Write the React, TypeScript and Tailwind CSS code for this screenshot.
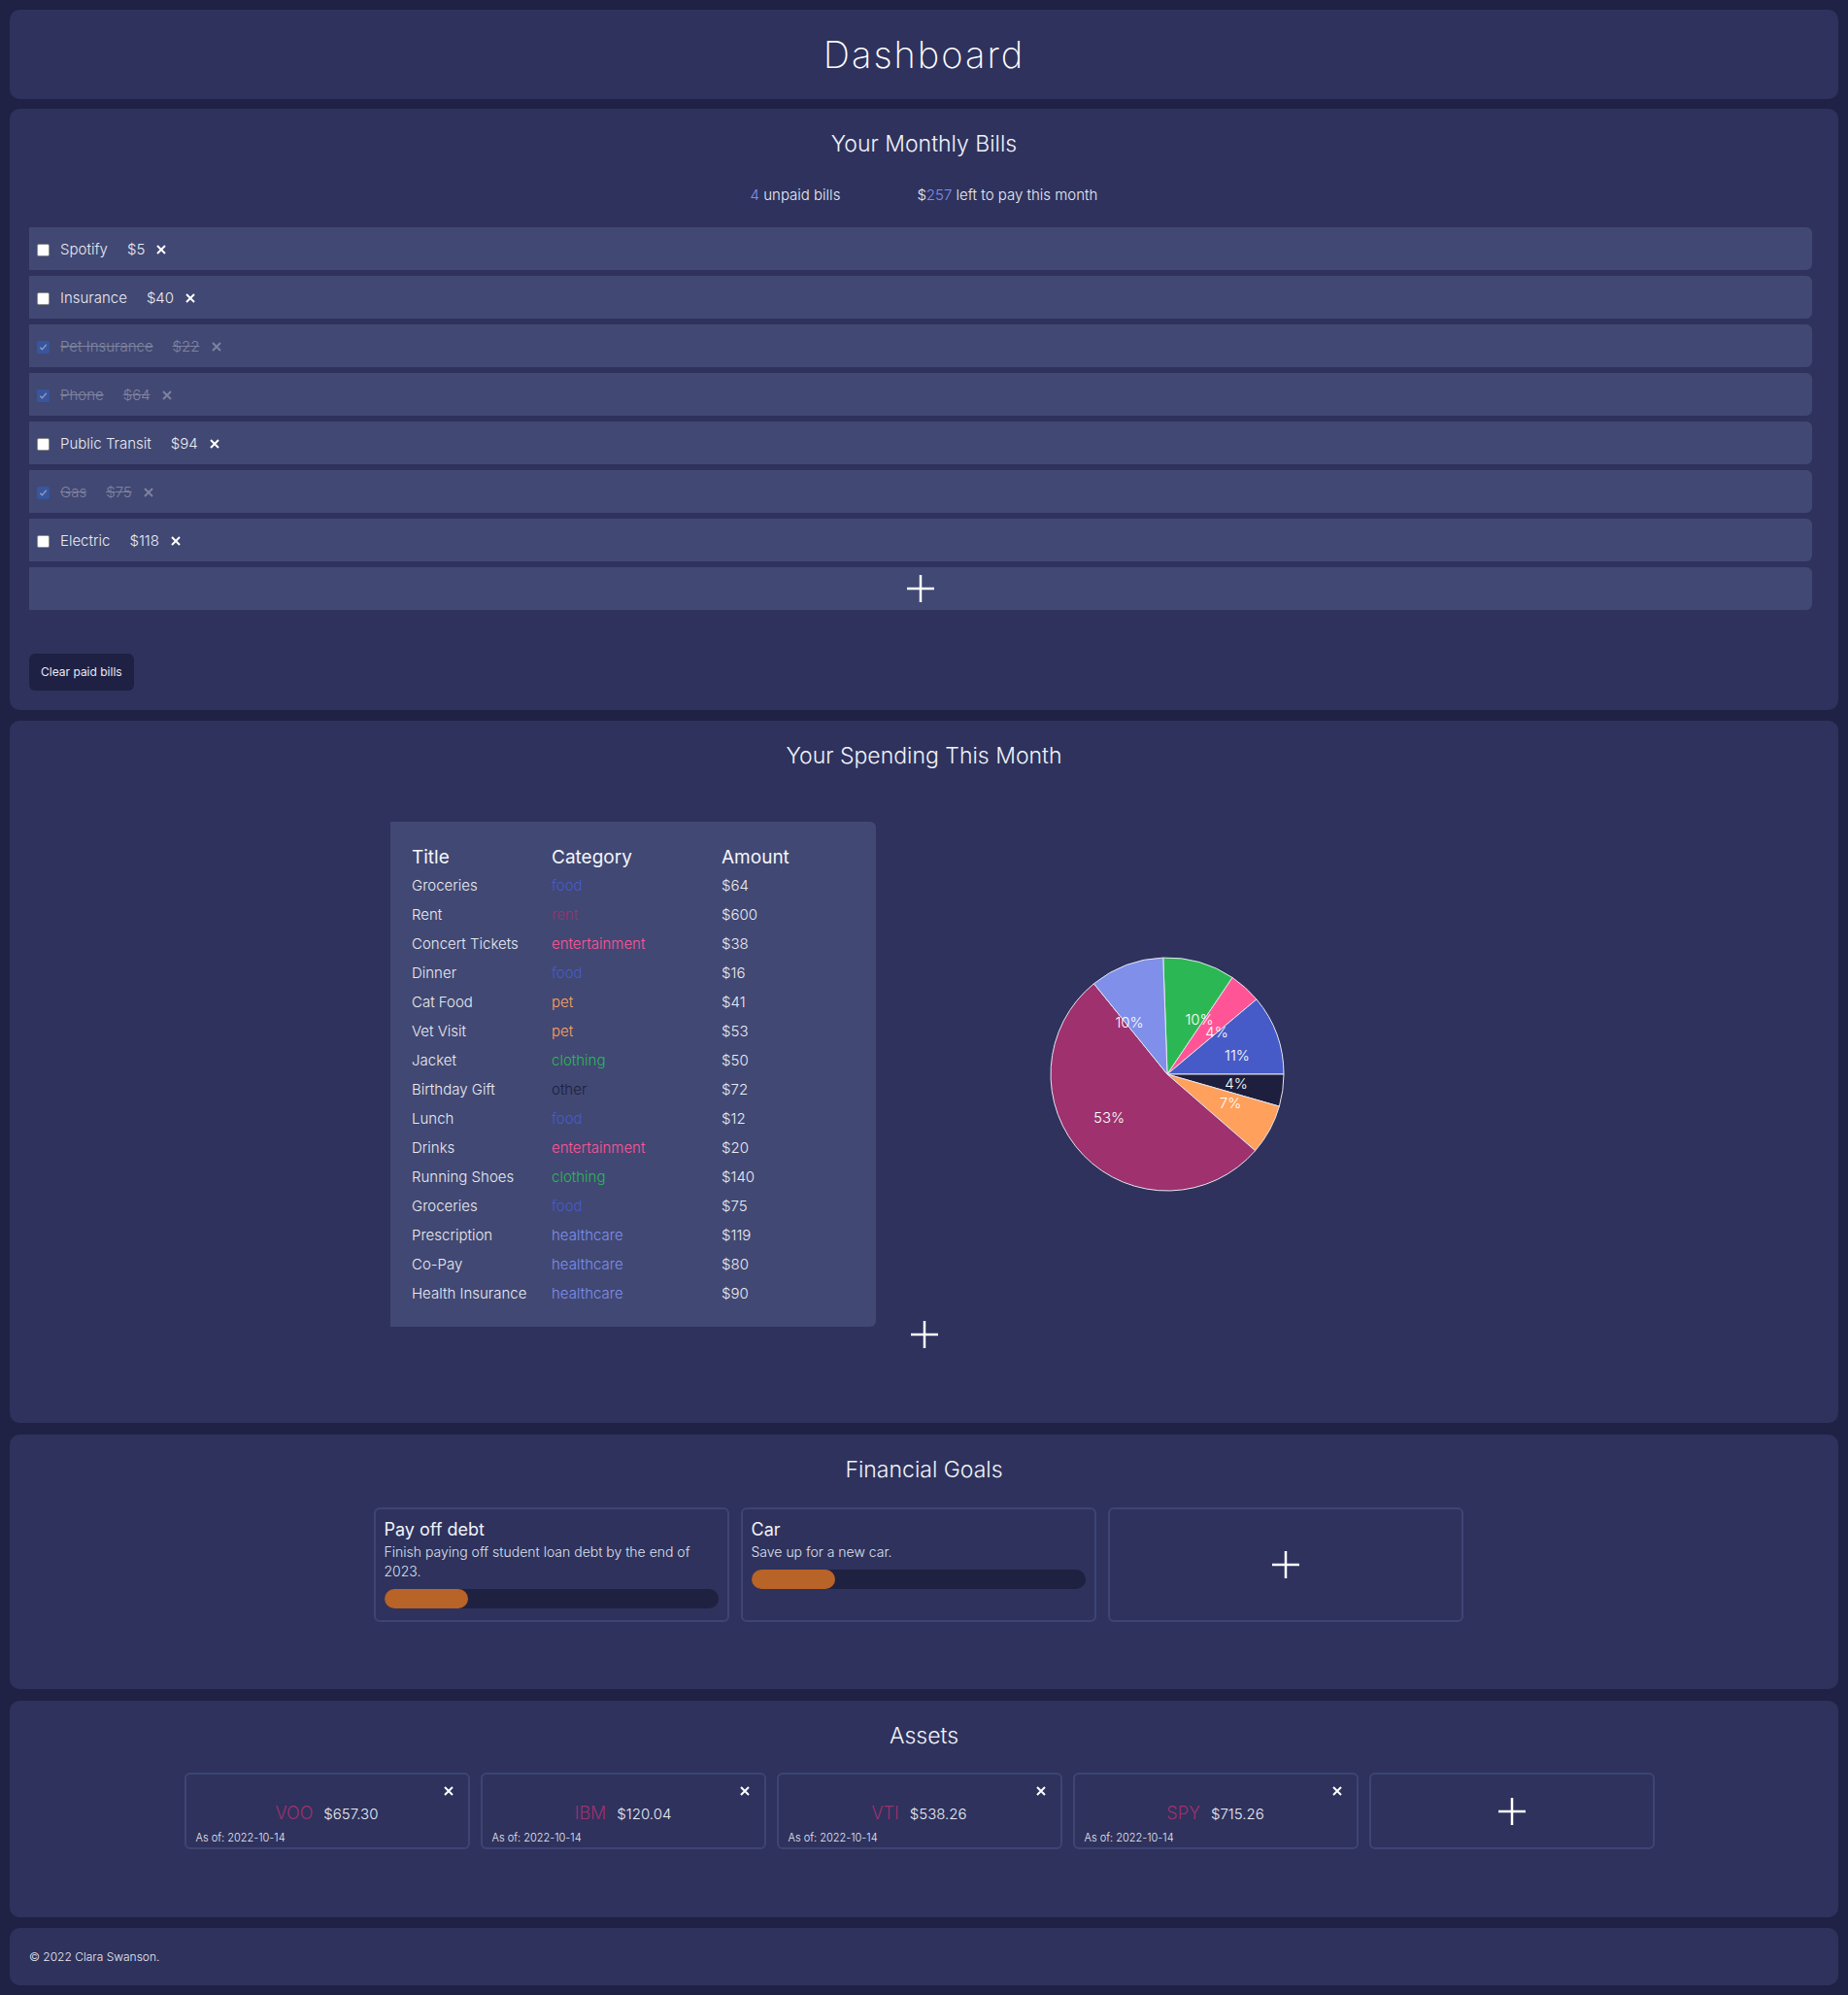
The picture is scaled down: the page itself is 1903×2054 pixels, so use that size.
import React from "react";

type Bill = { name: string; amount: number; paid: boolean };

const bills: Bill[] = [
  { name: "Spotify", amount: 5, paid: false },
  { name: "Insurance", amount: 40, paid: false },
  { name: "Pet Insurance", amount: 22, paid: true },
  { name: "Phone", amount: 64, paid: true },
  { name: "Public Transit", amount: 94, paid: false },
  { name: "Gas", amount: 75, paid: true },
  { name: "Electric", amount: 118, paid: false },
];

// category -> text colour (same colours as the pie)
const categoryClass: Record<string, string> = {
  food: "text-[#465bc8]",
  rent: "text-[#9e316e]",
  entertainment: "text-[#ff5597]",
  pet: "text-[#ffa05c]",
  clothing: "text-[#2bb854]",
  other: "text-[#1e1f3f]",
  healthcare: "text-[#7f8fea]",
};

const expenses = [
  { title: "Groceries", category: "food", amount: 64 },
  { title: "Rent", category: "rent", amount: 600 },
  { title: "Concert Tickets", category: "entertainment", amount: 38 },
  { title: "Dinner", category: "food", amount: 16 },
  { title: "Cat Food", category: "pet", amount: 41 },
  { title: "Vet Visit", category: "pet", amount: 53 },
  { title: "Jacket", category: "clothing", amount: 50 },
  { title: "Birthday Gift", category: "other", amount: 72 },
  { title: "Lunch", category: "food", amount: 12 },
  { title: "Drinks", category: "entertainment", amount: 20 },
  { title: "Running Shoes", category: "clothing", amount: 140 },
  { title: "Groceries", category: "food", amount: 75 },
  { title: "Prescription", category: "healthcare", amount: 119 },
  { title: "Co-Pay", category: "healthcare", amount: 80 },
  { title: "Health Insurance", category: "healthcare", amount: 90 },
];

const slices = [
  { from: -2, to: 34, color: "#2bb854", label: "10%", lx: 33, ly: -57 },
  { from: 34, to: 50, color: "#ff5597", label: "4%", lx: 51, ly: -44 },
  { from: 50, to: 90, color: "#465bc8", label: "11%", lx: 72, ly: -20 },
  { from: 90, to: 106, color: "#1e1f3f", label: "4%", lx: 71, ly: 9 },
  { from: 106, to: 131, color: "#ffa05c", label: "7%", lx: 65, ly: 29 },
  { from: 131, to: 321, color: "#9e316e", label: "53%", lx: -60, ly: 44 },
  { from: 321, to: 358, color: "#7f8fea", label: "10%", lx: -39, ly: -54 },
];

const goals = [
  {
    title: "Pay off debt",
    desc: "Finish paying off student loan debt by the end of 2023.",
    pct: 25,
  },
  { title: "Car", desc: "Save up for a new car.", pct: 25 },
];

const assets = [
  { ticker: "VOO", price: "657.30" },
  { ticker: "IBM", price: "120.04" },
  { ticker: "VTI", price: "538.26" },
  { ticker: "SPY", price: "715.26" },
];

const PlusIcon = () => (
  <svg width="28" height="28" viewBox="0 0 28 28">
    <path d="M14 0v28M0 14h28" stroke="#ffffff" strokeWidth="2.5" />
  </svg>
);

const XIcon = ({ className }: { className?: string }) => (
  <svg width="10" height="10" viewBox="0 0 10 10" className={className}>
    <path d="M1 1l8 8M9 1l-8 8" stroke="currentColor" strokeWidth="2" />
  </svg>
);

const Checkbox = ({ checked }: { checked: boolean }) =>
  checked ? (
    <span className="flex h-[13px] w-[13px] items-center justify-center rounded-[2px] bg-[#2f66d6]">
      <svg width="9" height="9" viewBox="0 0 10 10">
        <path d="M1.5 5.2l2.3 2.4L8.6 2" stroke="#ffffff" strokeWidth="1.5" fill="none" />
      </svg>
    </span>
  ) : (
    <span className="h-[13px] w-[13px] rounded-[2px] border border-[#8d8d8d] bg-white" />
  );

const arcPath = (from: number, to: number, r: number) => {
  const rad = (a: number) => ((a - 90) * Math.PI) / 180;
  const x1 = r * Math.cos(rad(from));
  const y1 = r * Math.sin(rad(from));
  const x2 = r * Math.cos(rad(to));
  const y2 = r * Math.sin(rad(to));
  const large = to - from > 180 ? 1 : 0;
  return `M0 0 L${x1} ${y1} A${r} ${r} 0 ${large} 1 ${x2} ${y2} Z`;
};

const PieChart = () => (
  <svg width="244" height="244" viewBox="-122 -122 244 244">
    {slices.map((s, i) => (
      <path key={i} d={arcPath(s.from, s.to, 120)} fill={s.color} stroke="#e6e6ee" strokeWidth="1" />
    ))}
    {slices.map((s, i) => (
      <text
        key={"l" + i}
        x={s.lx}
        y={s.ly}
        fill="#ffffff"
        fontSize="15"
        fontWeight="300"
        textAnchor="middle"
        dominantBaseline="central"
        fontFamily="Inter, sans-serif"
      >
        {s.label}
      </text>
    ))}
  </svg>
);

const SectionTitle = ({ children }: { children: React.ReactNode }) => (
  <h2 className="text-center text-[23px] font-light leading-[28px] text-[#f1f2f8]">{children}</h2>
);

export default function App() {
  return (
    <div className="flex min-h-[2054px] flex-col bg-[#1f2145] px-[10px] pt-[10px] pb-[11px] font-['Inter',sans-serif] font-light text-[#e9eaf2]">
      {/* Header */}
      <header className="flex h-[92px] items-center justify-center rounded-[10px] bg-[#2e325d]">
        <h1 className="text-[38px] font-extralight tracking-[2px] text-white">Dashboard</h1>
      </header>

      {/* Bills */}
      <section className="mt-[10px] rounded-[10px] bg-[#2e325d] pt-[22px] pb-[20px]">
        <SectionTitle>Your Monthly Bills</SectionTitle>
        <div className="mt-[29px] flex h-[20px] items-center justify-center gap-[79px] text-[15px]">
          <span>
            <span className="text-[#7f8fea]">4</span> unpaid bills
          </span>
          <span>
            $<span className="text-[#7f8fea]">257</span> left to pay this month
          </span>
        </div>
        <div className="pl-[20px] pr-[27px]">
          <div className="mt-[23px] flex flex-col gap-[6px]">
            {bills.map((b) => (
              <div key={b.name} className="flex h-[44px] items-center rounded-r-md bg-[#414873] pl-[8px] pt-[2px] text-[15px]">
                <div className={b.paid ? "flex items-center opacity-45" : "flex items-center"}>
                  <Checkbox checked={b.paid} />
                  <span className={b.paid ? "ml-[11px] text-[#c8cad8] line-through" : "ml-[11px]"}>{b.name}</span>
                  <span className={b.paid ? "ml-[20px] text-[#c8cad8] line-through" : "ml-[20px]"}>${b.amount}</span>
                  <XIcon className={b.paid ? "ml-[12px] text-[#c8cad8]" : "ml-[12px] text-white"} />
                </div>
              </div>
            ))}
            <button className="flex h-[44px] items-center justify-center rounded-r-md bg-[#414873]">
              <PlusIcon />
            </button>
          </div>
          <button className="mt-[45px] h-[38px] rounded-md bg-[#1e2044] px-[12px] text-[12px] font-normal text-[#e9eaf2]">
            Clear paid bills
          </button>
        </div>
      </section>

      {/* Spending */}
      <section className="mt-[11px] rounded-[10px] bg-[#2e325d] pt-[22px] pb-[77px]">
        <SectionTitle>Your Spending This Month</SectionTitle>
        <div className="mt-[54px] flex justify-center pr-[49px]">
          <div className="h-[520px] w-[500px] rounded-r-md bg-[#414873] pt-[23px] pb-[20px] pl-[22px]">
            <div className="grid h-[28px] grid-cols-[144px_175px_1fr] items-center text-[19px] font-normal text-[#f4f5fa]">
              <span>Title</span>
              <span>Category</span>
              <span>Amount</span>
            </div>
            {expenses.map((e, i) => (
              <div key={i} className="grid h-[30px] grid-cols-[144px_175px_1fr] items-center text-[15px]">
                <span>{e.title}</span>
                <span className={categoryClass[e.category]}>{e.category}</span>
                <span>${e.amount}</span>
              </div>
            ))}
          </div>
          <div className="ml-[50px] flex w-[500px] items-center justify-center">
            <PieChart />
          </div>
        </div>
        <div className="-mt-[6px] flex justify-center">
          <button className="flex items-center justify-center">
            <PlusIcon />
          </button>
        </div>
      </section>

      {/* Goals */}
      <section className="mt-[12px] rounded-[10px] bg-[#2e325d] pt-[22px] pb-[69px]">
        <SectionTitle>Financial Goals</SectionTitle>
        <div className="mt-[25px] flex justify-center gap-[12px] pr-[12px]">
          {goals.map((g) => (
            <div key={g.title} className="h-[118px] w-[366px] rounded-md border-2 border-[#3e4573] px-[9px] pt-[8px]">
              <div className="text-[18px] font-normal leading-[26px] text-[#f1f2f8]">{g.title}</div>
              <div className="text-[14px] leading-[20px] text-[#dfe1ec]">{g.desc}</div>
              <div className="mt-[8px] h-[20px] w-full rounded-full bg-[#1f2140]">
                <div className="h-full rounded-full bg-[#b86328]" style={{ width: `${g.pct}%` }} />
              </div>
            </div>
          ))}
          <button className="flex h-[118px] w-[366px] items-center justify-center rounded-md border-2 border-[#3e4573]">
            <PlusIcon />
          </button>
        </div>
      </section>

      {/* Assets */}
      <section className="mt-[12px] rounded-[10px] bg-[#2e325d] pt-[22px] pb-[70px]">
        <SectionTitle>Assets</SectionTitle>
        <div className="mt-[24px] flex justify-center gap-[11px] pr-[10px]">
          {assets.map((a) => (
            <div key={a.ticker} className="flex h-[79px] w-[294px] flex-col rounded-md border-2 border-[#3e4573] px-[10px]">
              <div className="flex justify-end pt-[12px] pr-[5px]">
                <XIcon className="text-white" />
              </div>
              <div className="mt-[4px] flex items-baseline justify-center gap-[11px]">
                <span className="text-[18px] font-light text-[#9e316e]">{a.ticker}</span>
                <span className="text-[15px]">${a.price}</span>
              </div>
              <div className="mt-auto pb-[3px] text-[11px] leading-[14px]">As of: 2022-10-14</div>
            </div>
          ))}
          <button className="flex h-[79px] w-[294px] items-center justify-center rounded-md border-2 border-[#3e4573]">
            <PlusIcon />
          </button>
        </div>
      </section>

      {/* Footer */}
      <footer className="mt-[11px] flex h-[59px] items-center rounded-[10px] bg-[#2e325d] pl-[20px] text-[12px]">
        © 2022 Clara Swanson.
      </footer>
    </div>
  );
}
